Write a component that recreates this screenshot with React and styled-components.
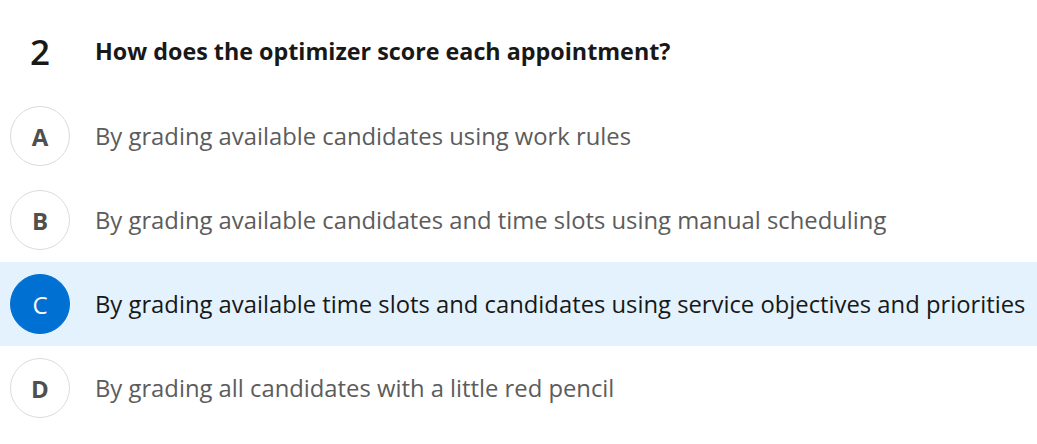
import React from "react";
import styled, { createGlobalStyle } from "styled-components";

const GlobalStyle = createGlobalStyle`
  body {
    margin: 0;
    background: #fff;
    font-family: "Open Sans", Lato, sans-serif;
  }
`;

const options = [
  { key: "A", text: "By grading available candidates using work rules" },
  { key: "B", text: "By grading available candidates and time slots using manual scheduling" },
  { key: "C", text: "By grading available time slots and candidates using service objectives and priorities", selected: true },
  { key: "D", text: "By grading all candidates with a little red pencil" },
];

const App = () => {
  return (
    <>
      <GlobalStyle />
      <Question>
        <Header>
          <Number>2</Number>
          <Title>How does the optimizer score each appointment?</Title>
        </Header>
        <List>
          {options.map((o) => (
            <Option key={o.key} $selected={o.selected}>
              <Letter $selected={o.selected}>{o.key}</Letter>
              <Label $selected={o.selected}>{o.text}</Label>
            </Option>
          ))}
        </List>
      </Question>
    </>
  );
};

const Question = styled.div`
  width: 1037px;
`;

const Header = styled.div`
  display: flex;
  align-items: center;
  height: 94px;
  padding-top: 10px;
  padding-bottom: 2px;
  box-sizing: border-box;
`;

const Number = styled.div`
  width: 80px;
  text-align: center;
  font-size: 35px;
  font-weight: 600;
  color: #181818;
`;

const Title = styled.h2`
  margin: 0 0 0 15px;
  font-size: 23.3px;
  font-weight: 700;
  color: #181818;
`;

const List = styled.ul`
  list-style: none;
  margin: 0;
  padding: 0;
`;

const Option = styled.li`
  display: flex;
  align-items: center;
  height: 84px;
  padding-left: 10px;
  box-sizing: border-box;
  background: ${(p) => (p.$selected ? "#e3f2fd" : "transparent")};
`;

const Letter = styled.div`
  width: 60px;
  height: 60px;
  border-radius: 50%;
  box-sizing: border-box;
  border: 1px solid ${(p) => (p.$selected ? "#0070d2" : "#dddbda")};
  background: ${(p) => (p.$selected ? "#0070d2" : "#fff")};
  color: ${(p) => (p.$selected ? "#fff" : "#514f4d")};
  display: flex;
  align-items: center;
  justify-content: center;
  font-size: 24px;
  font-weight: ${(p) => (p.$selected ? 400 : 700)};
  flex-shrink: 0;
`;

const Label = styled.span`
  margin-left: 25px;
  font-size: 23.8px;
  color: ${(p) => (p.$selected ? "#181818" : "#5c5c5c")};
  white-space: nowrap;
`;

export default App;
